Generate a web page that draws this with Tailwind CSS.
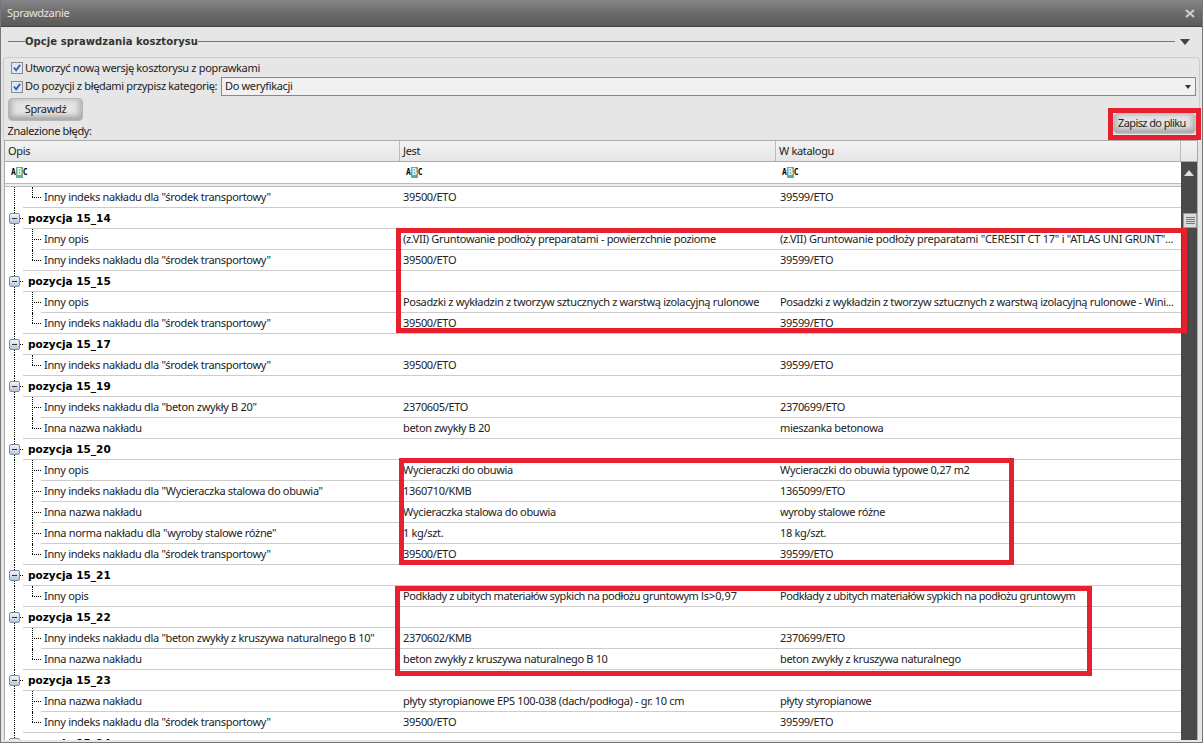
<!DOCTYPE html>
<html><head><meta charset="utf-8"><script src="https://cdn.jsdelivr.net/npm/@tailwindcss/browser@4"></script></head>
<body class="m-0 overflow-hidden">
<div class="relative w-[1203px] h-[743px] overflow-hidden flex flex-col border-x border-b border-[#777] bg-[#e6e6e6] text-[#222] text-[11px] tracking-[-0.33px] font-['Noto_Sans',sans-serif]">
<div class="h-[27px] shrink-0 flex items-center justify-between pl-[6px] pr-[7px] bg-gradient-to-b from-[#858585] via-[#6c6c6c] to-[#5a5a5a] border-b border-[#444] text-[#e4e4e4]"><span>Sprawdzanie</span><svg width="10" height="9" viewBox="0 0 10 9"><path d="M1 1l8 7M9 1L1 8" stroke="#ccc" stroke-width="2.2"/></svg></div>
<div class="h-[30px] shrink-0 flex items-center pl-[7px] pr-[12px] pb-[2px]"><div class="w-[17px] h-px bg-[#777]"></div><span class="font-bold font-['DejaVu_Sans',sans-serif] text-[10px] tracking-[0.07px] text-[#333]">Opcje sprawdzania kosztorysu</span><div class="flex-1 h-px bg-[#777]"></div><svg class="ml-[5px] mt-[2px]" width="10" height="6" viewBox="0 0 10 6"><path d="M0 0h10L5 6z" fill="#444"/></svg></div>
<div class="mx-[2px] h-[83px] shrink-0 border border-[#ccc] border-b-0 rounded-t pl-[4px] pt-[1px] relative">
  <div class="h-[18px] pl-[3px] flex items-center gap-[2px]"><span class="w-[12px] h-[12px] bg-[#dfe8f4] border border-[#8a8a8a] flex items-center justify-center"><svg width="8" height="8" viewBox="0 0 9 9"><path d="M1 4l2.5 3L8 1" stroke="#2f5fa8" stroke-width="2" fill="none"/></svg></span><span>Utworzyć nową wersję kosztorysu z poprawkami</span></div>
  <div class="h-[19px] pl-[3px] flex items-center gap-[2px]"><span class="w-[12px] h-[12px] bg-[#dfe8f4] border border-[#8a8a8a] flex items-center justify-center"><svg width="8" height="8" viewBox="0 0 9 9"><path d="M1 4l2.5 3L8 1" stroke="#2f5fa8" stroke-width="2" fill="none"/></svg></span><span class="w-[194px]">Do pozycji z błędami przypisz kategorię:</span><div class="flex-1 h-[19px] mr-[3px] bg-[#f1f1f1] border border-[#888] pl-[3px] flex items-center justify-between pr-[4px]"><span>Do weryfikacji</span><svg width="6" height="4" viewBox="0 0 6 4"><path d="M0 0h6L3 4z" fill="#333"/></svg></div></div>
  <div class="mt-[2px] w-[75px] h-[23px] rounded-sm border border-[#b5b5b5] flex items-center justify-center bg-[#e4e4e4] shadow-[inset_0_-4px_5px_#aaa,inset_4px_0_5px_#c4c4c4,inset_-4px_0_5px_#c4c4c4]">Sprawdź</div>
  <div class="mt-[2px] h-[16px] leading-[16px] -ml-[1px] pl-[0.5px]">Znalezione błędy:</div>
  <div class="absolute right-[3px] top-[55px] w-[83px] h-[21px] rounded-sm border border-[#c4c4c4] flex items-center pl-[4px] tracking-[-0.6px] bg-[#e4e4e4] shadow-[inset_0_-4px_5px_#aaa,inset_4px_0_5px_#c4c4c4,inset_-4px_0_5px_#c4c4c4]">Zapisz do pliku</div>
</div>
<div class="flex-1 min-h-0 ml-[3px] mr-[4px] mb-[2px] border border-b-0 border-[#aaa] flex flex-col overflow-hidden bg-white">
  <div class="h-[21px] shrink-0 flex bg-gradient-to-b from-[#f3f3f3] to-[#e6e6e6] border-b border-[#aaa]">
    <div class="w-[395px] pl-[3px] border-r border-[#bbb] leading-[20px]">Opis</div><div class="w-[376px] pl-[3px] border-r border-[#bbb] leading-[20px]">Jest</div><div class="w-[405px] pl-[3px] border-r border-[#bbb] leading-[20px]">W katalogu</div><div class="flex-1"></div>
  </div>
  <div class="flex-1 flex min-h-0">
    <div class="w-[1176px] flex flex-col overflow-hidden">
      <div class="h-[21px] shrink-0 flex items-center">
        <div class="w-[395px] pl-[6px]"><div class="flex items-center w-fit h-[11px] font-['DejaVu_Sans_Mono',monospace] font-bold text-[8px] tracking-normal text-black">A<span class="bg-[#5fae90] text-white w-[7px] h-[11px] flex items-center justify-center">B</span>C</div></div>
        <div class="w-[376px] pl-[6px]"><div class="flex items-center w-fit h-[11px] font-['DejaVu_Sans_Mono',monospace] font-bold text-[8px] tracking-normal text-black">A<span class="bg-[#5fae90] text-white w-[7px] h-[11px] flex items-center justify-center">B</span>C</div></div>
        <div class="w-[405px] pl-[6px]"><div class="flex items-center w-fit h-[11px] font-['DejaVu_Sans_Mono',monospace] font-bold text-[8px] tracking-normal text-black">A<span class="bg-[#5fae90] text-white w-[7px] h-[11px] flex items-center justify-center">B</span>C</div></div>
      </div>
      <div class="h-[4px] shrink-0 bg-[#eee] border-y border-[#bbb]"></div>
      <div class="flex flex-col">

<div class="flex h-[21px] shrink-0"><div class="w-[18px] relative"><i class="absolute left-[9px] inset-y-0 border-l border-dotted border-black"></i></div><div class="w-[18px] relative border-b border-[#ccc]"><i class="absolute left-[9px] top-0 h-[10px] border-l border-dotted border-black"></i><i class="absolute left-[9px] top-[10px] w-[9px] border-t border-dotted border-black"></i></div><div class="w-[359px] pl-[3px] border-b border-[#ccc] leading-[20px]">Inny indeks nakładu dla "środek transportowy"</div><div class="w-[376px] pl-[3px] border-b border-[#ccc] leading-[20px]">39500/ETO</div><div class="w-[405px] pl-[4px] border-b border-[#ccc] leading-[20px]">39599/ETO</div></div>

<div class="flex h-[21px] shrink-0"><div class="w-[18px] relative"><i class="absolute left-[9px] inset-y-0 border-l border-dotted border-black"></i><span class="absolute left-[4px] top-[5px] w-[11px] h-[11px] rounded-[2px] border border-[#7b8ea8] bg-gradient-to-b from-[#f2f5f9] to-[#b9c6d8] flex items-center justify-center"><b class="block w-[5px] h-px bg-[#333]"></b></span><i class="absolute left-[15px] top-[10px] w-[3px] border-t border-dotted border-black"></i></div><div class="w-[377px] pl-[5px] border-b border-[#ccc] leading-[20px] font-bold text-black tracking-[0px] font-['DejaVu_Sans',sans-serif] text-[10.5px]">pozycja 15_14</div><div class="w-[376px] border-b border-[#ccc]"></div><div class="w-[405px] border-b border-[#ccc]"></div></div>

<div class="flex h-[21px] shrink-0"><div class="w-[18px] relative"><i class="absolute left-[9px] inset-y-0 border-l border-dotted border-black"></i></div><div class="w-[18px] relative"><i class="absolute left-[9px] inset-y-0 border-l border-dotted border-black"></i><i class="absolute left-[9px] top-[10px] w-[9px] border-t border-dotted border-black"></i></div><div class="w-[359px] pl-[3px] border-b border-[#ccc] leading-[20px]">Inny opis</div><div class="w-[376px] pl-[3px] border-b border-[#ccc] leading-[20px]">(z.VII) Gruntowanie podłoży preparatami - powierzchnie poziome</div><div class="w-[405px] pl-[4px] border-b border-[#ccc] leading-[20px] tracking-[-0.26px]">(z.VII) Gruntowanie podłoży preparatami "CERESIT CT 17" i "ATLAS UNI GRUNT"...</div></div>

<div class="flex h-[21px] shrink-0"><div class="w-[18px] relative"><i class="absolute left-[9px] inset-y-0 border-l border-dotted border-black"></i></div><div class="w-[18px] relative border-b border-[#ccc]"><i class="absolute left-[9px] top-0 h-[10px] border-l border-dotted border-black"></i><i class="absolute left-[9px] top-[10px] w-[9px] border-t border-dotted border-black"></i></div><div class="w-[359px] pl-[3px] border-b border-[#ccc] leading-[20px]">Inny indeks nakładu dla "środek transportowy"</div><div class="w-[376px] pl-[3px] border-b border-[#ccc] leading-[20px]">39500/ETO</div><div class="w-[405px] pl-[4px] border-b border-[#ccc] leading-[20px]">39599/ETO</div></div>

<div class="flex h-[21px] shrink-0"><div class="w-[18px] relative"><i class="absolute left-[9px] inset-y-0 border-l border-dotted border-black"></i><span class="absolute left-[4px] top-[5px] w-[11px] h-[11px] rounded-[2px] border border-[#7b8ea8] bg-gradient-to-b from-[#f2f5f9] to-[#b9c6d8] flex items-center justify-center"><b class="block w-[5px] h-px bg-[#333]"></b></span><i class="absolute left-[15px] top-[10px] w-[3px] border-t border-dotted border-black"></i></div><div class="w-[377px] pl-[5px] border-b border-[#ccc] leading-[20px] font-bold text-black tracking-[0px] font-['DejaVu_Sans',sans-serif] text-[10.5px]">pozycja 15_15</div><div class="w-[376px] border-b border-[#ccc]"></div><div class="w-[405px] border-b border-[#ccc]"></div></div>

<div class="flex h-[21px] shrink-0"><div class="w-[18px] relative"><i class="absolute left-[9px] inset-y-0 border-l border-dotted border-black"></i></div><div class="w-[18px] relative"><i class="absolute left-[9px] inset-y-0 border-l border-dotted border-black"></i><i class="absolute left-[9px] top-[10px] w-[9px] border-t border-dotted border-black"></i></div><div class="w-[359px] pl-[3px] border-b border-[#ccc] leading-[20px]">Inny opis</div><div class="w-[376px] pl-[3px] border-b border-[#ccc] leading-[20px]">Posadzki z wykładzin z tworzyw sztucznych z warstwą izolacyjną rulonowe</div><div class="w-[405px] pl-[4px] border-b border-[#ccc] leading-[20px]">Posadzki z wykładzin z tworzyw sztucznych z warstwą izolacyjną rulonowe - Wini...</div></div>

<div class="flex h-[21px] shrink-0"><div class="w-[18px] relative"><i class="absolute left-[9px] inset-y-0 border-l border-dotted border-black"></i></div><div class="w-[18px] relative border-b border-[#ccc]"><i class="absolute left-[9px] top-0 h-[10px] border-l border-dotted border-black"></i><i class="absolute left-[9px] top-[10px] w-[9px] border-t border-dotted border-black"></i></div><div class="w-[359px] pl-[3px] border-b border-[#ccc] leading-[20px]">Inny indeks nakładu dla "środek transportowy"</div><div class="w-[376px] pl-[3px] border-b border-[#ccc] leading-[20px]">39500/ETO</div><div class="w-[405px] pl-[4px] border-b border-[#ccc] leading-[20px]">39599/ETO</div></div>

<div class="flex h-[21px] shrink-0"><div class="w-[18px] relative"><i class="absolute left-[9px] inset-y-0 border-l border-dotted border-black"></i><span class="absolute left-[4px] top-[5px] w-[11px] h-[11px] rounded-[2px] border border-[#7b8ea8] bg-gradient-to-b from-[#f2f5f9] to-[#b9c6d8] flex items-center justify-center"><b class="block w-[5px] h-px bg-[#333]"></b></span><i class="absolute left-[15px] top-[10px] w-[3px] border-t border-dotted border-black"></i></div><div class="w-[377px] pl-[5px] border-b border-[#ccc] leading-[20px] font-bold text-black tracking-[0px] font-['DejaVu_Sans',sans-serif] text-[10.5px]">pozycja 15_17</div><div class="w-[376px] border-b border-[#ccc]"></div><div class="w-[405px] border-b border-[#ccc]"></div></div>

<div class="flex h-[21px] shrink-0"><div class="w-[18px] relative"><i class="absolute left-[9px] inset-y-0 border-l border-dotted border-black"></i></div><div class="w-[18px] relative border-b border-[#ccc]"><i class="absolute left-[9px] top-0 h-[10px] border-l border-dotted border-black"></i><i class="absolute left-[9px] top-[10px] w-[9px] border-t border-dotted border-black"></i></div><div class="w-[359px] pl-[3px] border-b border-[#ccc] leading-[20px]">Inny indeks nakładu dla "środek transportowy"</div><div class="w-[376px] pl-[3px] border-b border-[#ccc] leading-[20px]">39500/ETO</div><div class="w-[405px] pl-[4px] border-b border-[#ccc] leading-[20px]">39599/ETO</div></div>

<div class="flex h-[21px] shrink-0"><div class="w-[18px] relative"><i class="absolute left-[9px] inset-y-0 border-l border-dotted border-black"></i><span class="absolute left-[4px] top-[5px] w-[11px] h-[11px] rounded-[2px] border border-[#7b8ea8] bg-gradient-to-b from-[#f2f5f9] to-[#b9c6d8] flex items-center justify-center"><b class="block w-[5px] h-px bg-[#333]"></b></span><i class="absolute left-[15px] top-[10px] w-[3px] border-t border-dotted border-black"></i></div><div class="w-[377px] pl-[5px] border-b border-[#ccc] leading-[20px] font-bold text-black tracking-[0px] font-['DejaVu_Sans',sans-serif] text-[10.5px]">pozycja 15_19</div><div class="w-[376px] border-b border-[#ccc]"></div><div class="w-[405px] border-b border-[#ccc]"></div></div>

<div class="flex h-[21px] shrink-0"><div class="w-[18px] relative"><i class="absolute left-[9px] inset-y-0 border-l border-dotted border-black"></i></div><div class="w-[18px] relative"><i class="absolute left-[9px] inset-y-0 border-l border-dotted border-black"></i><i class="absolute left-[9px] top-[10px] w-[9px] border-t border-dotted border-black"></i></div><div class="w-[359px] pl-[3px] border-b border-[#ccc] leading-[20px]">Inny indeks nakładu dla "beton zwykły B 20"</div><div class="w-[376px] pl-[3px] border-b border-[#ccc] leading-[20px]">2370605/ETO</div><div class="w-[405px] pl-[4px] border-b border-[#ccc] leading-[20px]">2370699/ETO</div></div>

<div class="flex h-[21px] shrink-0"><div class="w-[18px] relative"><i class="absolute left-[9px] inset-y-0 border-l border-dotted border-black"></i></div><div class="w-[18px] relative border-b border-[#ccc]"><i class="absolute left-[9px] top-0 h-[10px] border-l border-dotted border-black"></i><i class="absolute left-[9px] top-[10px] w-[9px] border-t border-dotted border-black"></i></div><div class="w-[359px] pl-[3px] border-b border-[#ccc] leading-[20px]">Inna nazwa nakładu</div><div class="w-[376px] pl-[3px] border-b border-[#ccc] leading-[20px]">beton zwykły B 20</div><div class="w-[405px] pl-[4px] border-b border-[#ccc] leading-[20px]">mieszanka betonowa</div></div>

<div class="flex h-[21px] shrink-0"><div class="w-[18px] relative"><i class="absolute left-[9px] inset-y-0 border-l border-dotted border-black"></i><span class="absolute left-[4px] top-[5px] w-[11px] h-[11px] rounded-[2px] border border-[#7b8ea8] bg-gradient-to-b from-[#f2f5f9] to-[#b9c6d8] flex items-center justify-center"><b class="block w-[5px] h-px bg-[#333]"></b></span><i class="absolute left-[15px] top-[10px] w-[3px] border-t border-dotted border-black"></i></div><div class="w-[377px] pl-[5px] border-b border-[#ccc] leading-[20px] font-bold text-black tracking-[0px] font-['DejaVu_Sans',sans-serif] text-[10.5px]">pozycja 15_20</div><div class="w-[376px] border-b border-[#ccc]"></div><div class="w-[405px] border-b border-[#ccc]"></div></div>

<div class="flex h-[21px] shrink-0"><div class="w-[18px] relative"><i class="absolute left-[9px] inset-y-0 border-l border-dotted border-black"></i></div><div class="w-[18px] relative"><i class="absolute left-[9px] inset-y-0 border-l border-dotted border-black"></i><i class="absolute left-[9px] top-[10px] w-[9px] border-t border-dotted border-black"></i></div><div class="w-[359px] pl-[3px] border-b border-[#ccc] leading-[20px]">Inny opis</div><div class="w-[376px] pl-[3px] border-b border-[#ccc] leading-[20px]">Wycieraczki do obuwia</div><div class="w-[405px] pl-[4px] border-b border-[#ccc] leading-[20px]">Wycieraczki do obuwia typowe 0,27 m2</div></div>

<div class="flex h-[21px] shrink-0"><div class="w-[18px] relative"><i class="absolute left-[9px] inset-y-0 border-l border-dotted border-black"></i></div><div class="w-[18px] relative"><i class="absolute left-[9px] inset-y-0 border-l border-dotted border-black"></i><i class="absolute left-[9px] top-[10px] w-[9px] border-t border-dotted border-black"></i></div><div class="w-[359px] pl-[3px] border-b border-[#ccc] leading-[20px]">Inny indeks nakładu dla "Wycieraczka stalowa do obuwia"</div><div class="w-[376px] pl-[3px] border-b border-[#ccc] leading-[20px]">1360710/KMB</div><div class="w-[405px] pl-[4px] border-b border-[#ccc] leading-[20px]">1365099/ETO</div></div>

<div class="flex h-[21px] shrink-0"><div class="w-[18px] relative"><i class="absolute left-[9px] inset-y-0 border-l border-dotted border-black"></i></div><div class="w-[18px] relative"><i class="absolute left-[9px] inset-y-0 border-l border-dotted border-black"></i><i class="absolute left-[9px] top-[10px] w-[9px] border-t border-dotted border-black"></i></div><div class="w-[359px] pl-[3px] border-b border-[#ccc] leading-[20px]">Inna nazwa nakładu</div><div class="w-[376px] pl-[3px] border-b border-[#ccc] leading-[20px]">Wycieraczka stalowa do obuwia</div><div class="w-[405px] pl-[4px] border-b border-[#ccc] leading-[20px]">wyroby stalowe różne</div></div>

<div class="flex h-[21px] shrink-0"><div class="w-[18px] relative"><i class="absolute left-[9px] inset-y-0 border-l border-dotted border-black"></i></div><div class="w-[18px] relative"><i class="absolute left-[9px] inset-y-0 border-l border-dotted border-black"></i><i class="absolute left-[9px] top-[10px] w-[9px] border-t border-dotted border-black"></i></div><div class="w-[359px] pl-[3px] border-b border-[#ccc] leading-[20px]">Inna norma nakładu dla "wyroby stalowe różne"</div><div class="w-[376px] pl-[3px] border-b border-[#ccc] leading-[20px]">1 kg/szt.</div><div class="w-[405px] pl-[4px] border-b border-[#ccc] leading-[20px]">18 kg/szt.</div></div>

<div class="flex h-[21px] shrink-0"><div class="w-[18px] relative"><i class="absolute left-[9px] inset-y-0 border-l border-dotted border-black"></i></div><div class="w-[18px] relative border-b border-[#ccc]"><i class="absolute left-[9px] top-0 h-[10px] border-l border-dotted border-black"></i><i class="absolute left-[9px] top-[10px] w-[9px] border-t border-dotted border-black"></i></div><div class="w-[359px] pl-[3px] border-b border-[#ccc] leading-[20px]">Inny indeks nakładu dla "środek transportowy"</div><div class="w-[376px] pl-[3px] border-b border-[#ccc] leading-[20px]">39500/ETO</div><div class="w-[405px] pl-[4px] border-b border-[#ccc] leading-[20px]">39599/ETO</div></div>

<div class="flex h-[21px] shrink-0"><div class="w-[18px] relative"><i class="absolute left-[9px] inset-y-0 border-l border-dotted border-black"></i><span class="absolute left-[4px] top-[5px] w-[11px] h-[11px] rounded-[2px] border border-[#7b8ea8] bg-gradient-to-b from-[#f2f5f9] to-[#b9c6d8] flex items-center justify-center"><b class="block w-[5px] h-px bg-[#333]"></b></span><i class="absolute left-[15px] top-[10px] w-[3px] border-t border-dotted border-black"></i></div><div class="w-[377px] pl-[5px] border-b border-[#ccc] leading-[20px] font-bold text-black tracking-[0px] font-['DejaVu_Sans',sans-serif] text-[10.5px]">pozycja 15_21</div><div class="w-[376px] border-b border-[#ccc]"></div><div class="w-[405px] border-b border-[#ccc]"></div></div>

<div class="flex h-[21px] shrink-0"><div class="w-[18px] relative"><i class="absolute left-[9px] inset-y-0 border-l border-dotted border-black"></i></div><div class="w-[18px] relative border-b border-[#ccc]"><i class="absolute left-[9px] top-0 h-[10px] border-l border-dotted border-black"></i><i class="absolute left-[9px] top-[10px] w-[9px] border-t border-dotted border-black"></i></div><div class="w-[359px] pl-[3px] border-b border-[#ccc] leading-[20px]">Inny opis</div><div class="w-[376px] pl-[3px] border-b border-[#ccc] leading-[20px]"><span class="tracking-[-0.45px]">Podkłady z ubitych materiałów sypkich na podłożu gruntowym</span> <span class="tracking-[0px]">ls&gt;0,97</span></div><div class="w-[405px] pl-[4px] border-b border-[#ccc] leading-[20px] tracking-[-0.45px]">Podkłady z ubitych materiałów sypkich na podłożu gruntowym</div></div>

<div class="flex h-[21px] shrink-0"><div class="w-[18px] relative"><i class="absolute left-[9px] inset-y-0 border-l border-dotted border-black"></i><span class="absolute left-[4px] top-[5px] w-[11px] h-[11px] rounded-[2px] border border-[#7b8ea8] bg-gradient-to-b from-[#f2f5f9] to-[#b9c6d8] flex items-center justify-center"><b class="block w-[5px] h-px bg-[#333]"></b></span><i class="absolute left-[15px] top-[10px] w-[3px] border-t border-dotted border-black"></i></div><div class="w-[377px] pl-[5px] border-b border-[#ccc] leading-[20px] font-bold text-black tracking-[0px] font-['DejaVu_Sans',sans-serif] text-[10.5px]">pozycja 15_22</div><div class="w-[376px] border-b border-[#ccc]"></div><div class="w-[405px] border-b border-[#ccc]"></div></div>

<div class="flex h-[21px] shrink-0"><div class="w-[18px] relative"><i class="absolute left-[9px] inset-y-0 border-l border-dotted border-black"></i></div><div class="w-[18px] relative"><i class="absolute left-[9px] inset-y-0 border-l border-dotted border-black"></i><i class="absolute left-[9px] top-[10px] w-[9px] border-t border-dotted border-black"></i></div><div class="w-[359px] pl-[3px] border-b border-[#ccc] leading-[20px]">Inny indeks nakładu dla "beton zwykły z kruszywa naturalnego B 10"</div><div class="w-[376px] pl-[3px] border-b border-[#ccc] leading-[20px]">2370602/KMB</div><div class="w-[405px] pl-[4px] border-b border-[#ccc] leading-[20px]">2370699/ETO</div></div>

<div class="flex h-[21px] shrink-0"><div class="w-[18px] relative"><i class="absolute left-[9px] inset-y-0 border-l border-dotted border-black"></i></div><div class="w-[18px] relative border-b border-[#ccc]"><i class="absolute left-[9px] top-0 h-[10px] border-l border-dotted border-black"></i><i class="absolute left-[9px] top-[10px] w-[9px] border-t border-dotted border-black"></i></div><div class="w-[359px] pl-[3px] border-b border-[#ccc] leading-[20px]">Inna nazwa nakładu</div><div class="w-[376px] pl-[3px] border-b border-[#ccc] leading-[20px]">beton zwykły z kruszywa naturalnego B 10</div><div class="w-[405px] pl-[4px] border-b border-[#ccc] leading-[20px]">beton zwykły z kruszywa naturalnego</div></div>

<div class="flex h-[21px] shrink-0"><div class="w-[18px] relative"><i class="absolute left-[9px] inset-y-0 border-l border-dotted border-black"></i><span class="absolute left-[4px] top-[5px] w-[11px] h-[11px] rounded-[2px] border border-[#7b8ea8] bg-gradient-to-b from-[#f2f5f9] to-[#b9c6d8] flex items-center justify-center"><b class="block w-[5px] h-px bg-[#333]"></b></span><i class="absolute left-[15px] top-[10px] w-[3px] border-t border-dotted border-black"></i></div><div class="w-[377px] pl-[5px] border-b border-[#ccc] leading-[20px] font-bold text-black tracking-[0px] font-['DejaVu_Sans',sans-serif] text-[10.5px]">pozycja 15_23</div><div class="w-[376px] border-b border-[#ccc]"></div><div class="w-[405px] border-b border-[#ccc]"></div></div>

<div class="flex h-[21px] shrink-0"><div class="w-[18px] relative"><i class="absolute left-[9px] inset-y-0 border-l border-dotted border-black"></i></div><div class="w-[18px] relative"><i class="absolute left-[9px] inset-y-0 border-l border-dotted border-black"></i><i class="absolute left-[9px] top-[10px] w-[9px] border-t border-dotted border-black"></i></div><div class="w-[359px] pl-[3px] border-b border-[#ccc] leading-[20px]">Inna nazwa nakładu</div><div class="w-[376px] pl-[3px] border-b border-[#ccc] leading-[20px]">płyty styropianowe EPS 100-038 (dach/podłoga) - gr. 10 cm</div><div class="w-[405px] pl-[4px] border-b border-[#ccc] leading-[20px]">płyty styropianowe</div></div>

<div class="flex h-[21px] shrink-0"><div class="w-[18px] relative"><i class="absolute left-[9px] inset-y-0 border-l border-dotted border-black"></i></div><div class="w-[18px] relative border-b border-[#ccc]"><i class="absolute left-[9px] top-0 h-[10px] border-l border-dotted border-black"></i><i class="absolute left-[9px] top-[10px] w-[9px] border-t border-dotted border-black"></i></div><div class="w-[359px] pl-[3px] border-b border-[#ccc] leading-[20px]">Inny indeks nakładu dla "środek transportowy"</div><div class="w-[376px] pl-[3px] border-b border-[#ccc] leading-[20px]">39500/ETO</div><div class="w-[405px] pl-[4px] border-b border-[#ccc] leading-[20px]">39599/ETO</div></div>

<div class="flex h-[21px] shrink-0"><div class="w-[18px] relative"><i class="absolute left-[9px] inset-y-0 border-l border-dotted border-black"></i><span class="absolute left-[4px] top-[5px] w-[11px] h-[11px] rounded-[2px] border border-[#7b8ea8] bg-gradient-to-b from-[#f2f5f9] to-[#b9c6d8] flex items-center justify-center"><b class="block w-[5px] h-px bg-[#333]"></b></span><i class="absolute left-[15px] top-[10px] w-[3px] border-t border-dotted border-black"></i></div><div class="w-[377px] pl-[5px] border-b border-[#ccc] leading-[20px] font-bold text-black tracking-[0px] font-['DejaVu_Sans',sans-serif] text-[10.5px]">pozycja 15_24</div><div class="w-[376px] border-b border-[#ccc]"></div><div class="w-[405px] border-b border-[#ccc]"></div></div>

      </div>
    </div>
    <div class="flex-1 bg-[#4a4a4a] flex flex-col">
      <div class="h-[22px] shrink-0 flex items-center justify-center"><svg width="10" height="6" viewBox="0 0 10 6"><path d="M5 0l5 6H0z" fill="#ddd"/></svg></div>
      <div class="mt-[29px] ml-[2px] h-[15px] shrink-0 bg-[#dcdcdc] border border-[#999] flex flex-col items-center justify-center gap-px"><b class="block w-[9px] h-px bg-[#777]"></b><b class="block w-[9px] h-px bg-[#777]"></b><b class="block w-[9px] h-px bg-[#777]"></b><b class="block w-[9px] h-px bg-[#777]"></b></div>
    </div>
  </div>
</div>
<div class="absolute left-[1107px] top-[108px] w-[93px] h-[32px] border-[5px] border-[#e8202e]"></div>
<div class="absolute left-[395px] top-[228px] w-[791px] h-[105px] border-[5px] border-[#e8202e]"></div>
<div class="absolute left-[398px] top-[458px] w-[615px] h-[107px] border-[5px] border-[#e8202e]"></div>
<div class="absolute left-[394px] top-[586px] w-[697px] h-[90px] border-[5px] border-[#e8202e]"></div>
</div>
</body></html>
